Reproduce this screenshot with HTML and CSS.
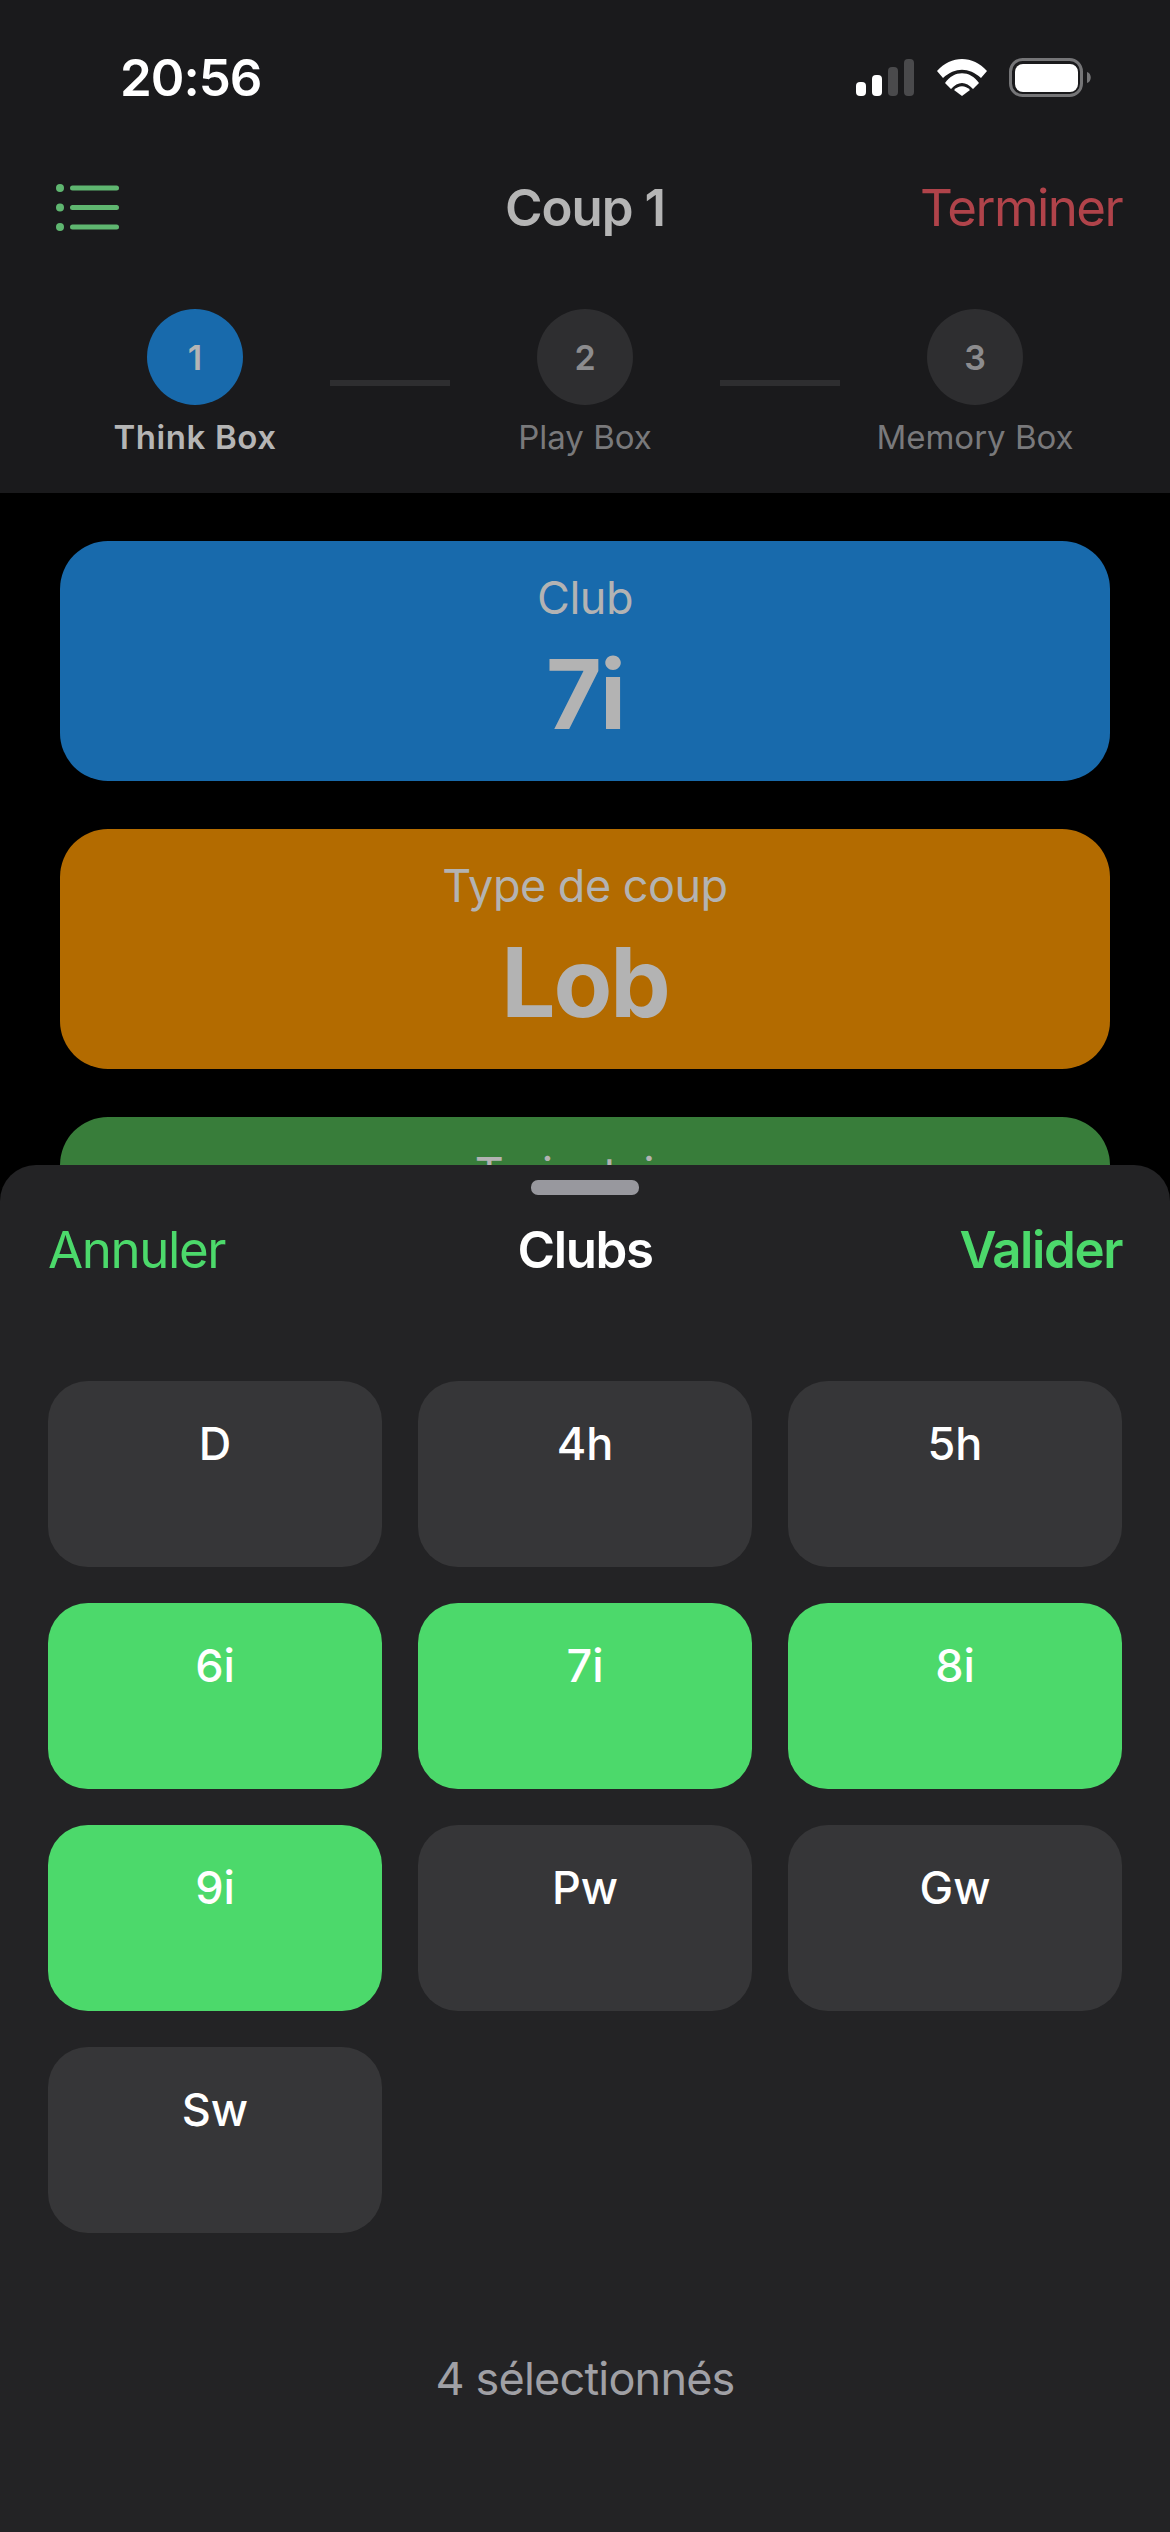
FILE: index.html
```html
<!DOCTYPE html>
<html lang="fr">
<head>
  <meta charset="UTF-8">
  <title>Coup 1</title>
  <link rel="stylesheet" href="styles.css">
</head>
<body>
<div class="screen">
  <header class="top">
    <div class="status">
      <span class="time">20:56</span>
      <svg class="status-icons" width="236" height="40" viewBox="0 0 236 40">
        <rect x="0" y="24" width="10" height="14" rx="4" fill="#fff"/>
        <rect x="16" y="17" width="10" height="21" rx="4" fill="#fff"/>
        <rect x="32" y="9" width="10" height="29" rx="4" fill="#4a4a4c"/>
        <rect x="48" y="1" width="10" height="37" rx="4" fill="#4a4a4c"/>
        <path d="M81 13 C95 -3 117 -3 131 13 L125 20 C113 9 99 9 87 20 Z" fill="#fff"/>
        <path d="M89 25 C98 12 114 12 123 25 L117 31 C110 23 102 23 95 31 Z" fill="#fff"/>
        <path d="M98 32 C103 27 109 27 114 32 L106 38 Z" fill="#fff"/>
        <rect x="154.500" y="1.500" width="71" height="36" rx="12" fill="none" stroke="#757577" stroke-width="3"/>
        <rect x="159" y="6" width="63" height="28" rx="8" fill="#fff"/>
        <path d="M231 14 C236 15 236 24 231 25 Z" fill="#757577"/>
      </svg>
    </div>
    <div class="navbar">
      <svg class="menu-icon" width="64" height="48" viewBox="0 0 64 48">
        <circle cx="5" cy="5" r="4" fill="#5fb670"/>
        <circle cx="5" cy="24.500" r="4" fill="#5fb670"/>
        <circle cx="5" cy="44" r="4" fill="#5fb670"/>
        <rect x="15" y="2.500" width="49" height="5" rx="2.500" fill="#5fb670"/>
        <rect x="15" y="22" width="49" height="5" rx="2.500" fill="#5fb670"/>
        <rect x="15" y="41.500" width="49" height="5" rx="2.500" fill="#5fb670"/>
      </svg>
      <h1 class="nav-title">Coup 1</h1>
      <span class="nav-end">Terminer</span>
    </div>
    <div class="stepper">
      <div class="step active">
        <span class="step-num">1</span>
        <span class="step-label">Think Box</span>
      </div>
      <span class="step-line"></span>
      <div class="step">
        <span class="step-num">2</span>
        <span class="step-label">Play Box</span>
      </div>
      <span class="step-line"></span>
      <div class="step">
        <span class="step-num">3</span>
        <span class="step-label">Memory Box</span>
      </div>
    </div>
  </header>

  <main class="cards">
    <div class="card card-blue">
      <span class="card-label">Club</span>
      <span class="card-value">7i</span>
    </div>
    <div class="card card-orange">
      <span class="card-label">Type de coup</span>
      <span class="card-value">Lob</span>
    </div>
    <div class="card card-green">
      <span class="card-label">Trajectoire</span>
    </div>
  </main>

  <section class="sheet">
    <div class="handle"></div>
    <div class="sheet-head">
      <span class="sheet-cancel">Annuler</span>
      <h2 class="sheet-title">Clubs</h2>
      <span class="sheet-ok">Valider</span>
    </div>
    <div class="clubs">
      <div class="club">D</div>
      <div class="club">4h</div>
      <div class="club">5h</div>
      <div class="club on">6i</div>
      <div class="club on">7i</div>
      <div class="club on">8i</div>
      <div class="club on">9i</div>
      <div class="club">Pw</div>
      <div class="club">Gw</div>
      <div class="club">Sw</div>
    </div>
    <p class="sheet-count">4 sélectionnés</p>
  </section>
</div>
</body>
</html>
```

FILE: styles.css
```css
* {
  box-sizing: border-box;
}
html, body {
  margin: 0;
  padding: 0;
  background: #000;
}
.screen {
  position: relative;
  width: 1170px;
  height: 2532px;
  overflow: hidden;
  background: #000;
  font-family: 'Inter', 'Liberation Sans', sans-serif;
}

/* Header */
.top {
  height: 493px;
  background: #1a1a1c;
}
.status {
  height: 159px;
  padding: 50px 0 0 120px;
  display: flex;
  justify-content: space-between;
  align-items: flex-start;
}
.time {
  color: #fff;
  font-size: 51px;
  font-weight: 600;
  line-height: 56px;
  letter-spacing: -1px;
}
.status-icons {
  margin: 8px 78px 0 0;
}
.navbar {
  height: 96px;
  padding: 0 48px;
  display: grid;
  grid-template-columns: 1fr auto 1fr;
  align-items: center;
}
.menu-icon {
  margin-left: 7px;
}
.nav-title {
  margin: 0;
  color: #b5b5b5;
  font-size: 51px;
  font-weight: 600;
  letter-spacing: -1px;
}
.nav-end {
  justify-self: end;
  color: #b0434a;
  font-size: 51px;
  font-weight: 400;
  letter-spacing: -1.6px;
}

/* Stepper */
.stepper {
  display: flex;
  padding: 54px 0 0 60px;
}
.step {
  width: 270px;
  display: flex;
  flex-direction: column;
  align-items: center;
  gap: 12px;
}
.step-num {
  width: 96px;
  height: 96px;
  border-radius: 50%;
  background: #2e2e30;
  color: #8c8c8e;
  font-size: 34px;
  font-weight: 600;
  display: flex;
  align-items: center;
  justify-content: center;
}
.step-label {
  color: #79797b;
  font-size: 33px;
  line-height: 40px;
  white-space: nowrap;
}
.step.active .step-num {
  background: #186aac;
  color: #b5b5b5;
}
.step.active .step-label {
  color: #b5b5b5;
  font-weight: 600;
  letter-spacing: 0.6px;
}
.step-line {
  flex: none;
  width: 120px;
  height: 6px;
  margin-top: 71px;
  background: #2e2e30;
}

/* Cards behind the sheet */
.cards {
  padding: 48px 60px 0;
  display: flex;
  flex-direction: column;
  gap: 48px;
}
.card {
  height: 240px;
  border-radius: 48px;
  display: flex;
  flex-direction: column;
  align-items: center;
  padding-top: 28px;
  color: #b3b3b3;
}
.card-blue {
  background: #186aac;
}
.card-orange {
  background: #b36b00;
}
.card-green {
  background: #387d3a;
}
.card-label {
  font-size: 45px;
  line-height: 58px;
  letter-spacing: -0.5px;
}
.card-value {
  margin-top: 9px;
  font-size: 96px;
  font-weight: 700;
  line-height: 116px;
  letter-spacing: -2px;
}

/* Bottom sheet */
.sheet {
  position: absolute;
  left: 0;
  right: 0;
  top: 1165px;
  bottom: 0;
  background: #232325;
  border-radius: 36px 36px 0 0;
  padding: 15px 48px 0;
}
.handle {
  width: 108px;
  height: 15px;
  margin: 0 auto;
  border-radius: 7px;
  background: #98989e;
}
.sheet-head {
  margin-top: 19px;
  height: 70px;
  display: grid;
  grid-template-columns: 1fr auto 1fr;
  align-items: center;
  font-size: 51px;
  letter-spacing: -1.4px;
}
.sheet-cancel {
  color: #4cd96b;
}
.sheet-title {
  margin: 0;
  color: #fff;
  font-size: 51px;
  font-weight: 600;
}
.sheet-ok {
  justify-self: end;
  color: #4cd96b;
  font-weight: 600;
}
.clubs {
  margin-top: 97px;
  display: grid;
  grid-template-columns: repeat(3, 334px);
  grid-auto-rows: 186px;
  gap: 36px;
}
.club {
  background: #363638;
  border-radius: 40px;
  color: #fff;
  font-size: 45px;
  font-weight: 500;
  line-height: 54px;
  padding-top: 36px;
  text-align: center;
}
.club.on {
  background: #4cd96b;
}
.sheet-count {
  margin: 119px 0 0;
  color: #a0a0a5;
  font-size: 45px;
  line-height: 54px;
  letter-spacing: -0.8px;
  text-align: center;
}
```
